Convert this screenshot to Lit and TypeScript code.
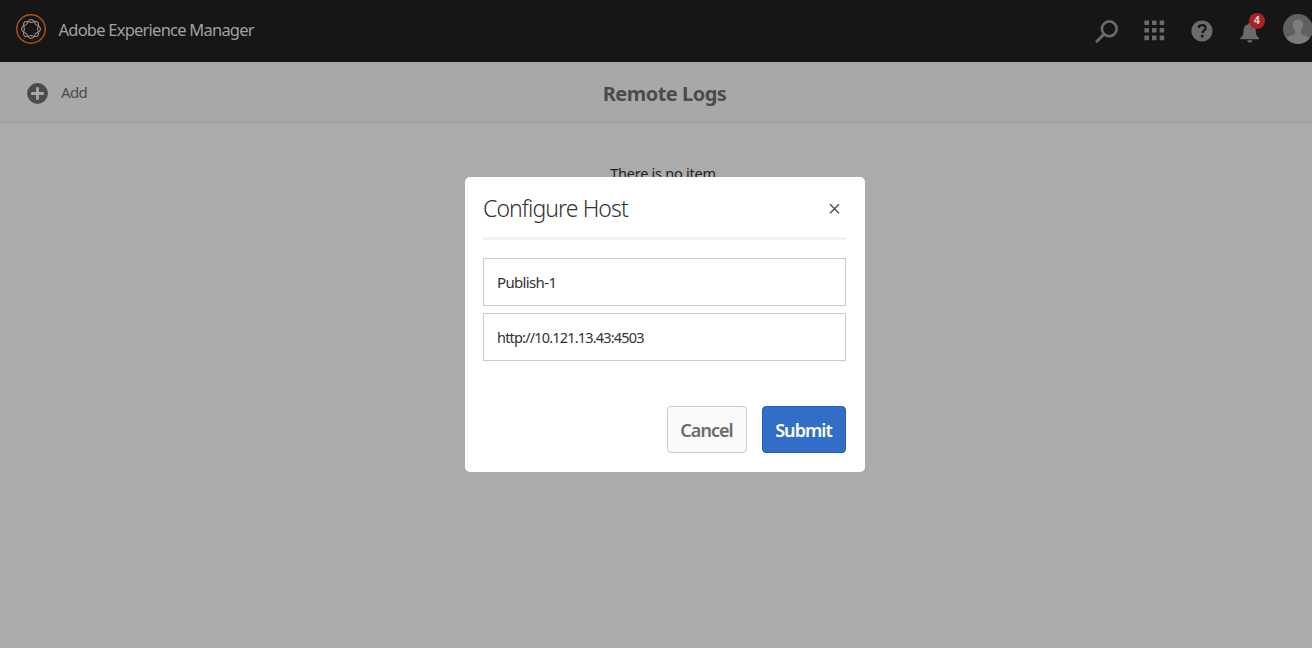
import { LitElement, html, css, svg } from "lit";
import { customElement, property } from "lit/decorators.js";

// Closed curve with four lobes around the centre of the logo.
const lobes = (amplitude: number) => {
  const points = Array.from({ length: 72 }, (_, i) => {
    const t = (i / 72) * Math.PI * 2;
    const r = 8 + amplitude * Math.cos(4 * t);
    return `${(16 + r * Math.cos(t)).toFixed(2)} ${(16 + r * Math.sin(t)).toFixed(2)}`;
  });
  return `M${points.join("L")}Z`;
};
const gridOffsets = [0.4, 8, 15.6];

@customElement("shell-header")
class ShellHeader extends LitElement {
  @property({ type: Number }) notifications = 4;

  static styles = css`
    :host { display: flex; align-items: flex-start; height: 62px; box-sizing: border-box; padding-left: 15px; background: #161616; overflow: hidden; color: #a0a0a0; }
    svg { display: block; flex: none; }
    .logo { margin-top: 13px; }
    .brand { margin-left: 11.5px; line-height: 60px; font-size: 16.5px; letter-spacing: -0.77px; white-space: nowrap; }
    .tools { display: flex; margin-left: auto; margin-right: -1px; }
    .tool { display: flex; position: relative; }
    .search { margin: 18px 25px 0 0; }
    .grid { margin: 20px 26px 0 0; }
    .help { margin: 20px 27px 0 0; }
    .bell { margin: 21px 23px 0 0; }
    .avatar { margin: 14px 0 0; }
    .badge { position: absolute; left: 9px; top: 13px; width: 16px; height: 16px; border-radius: 50%; background: #ac2121; color: #cfcfcf; font-size: 11px; font-weight: 700; line-height: 14px; text-align: center; }
  `;

  render() {
    return html`
      <svg class="logo" width="32" height="32" viewBox="0 0 32 32" fill="none">
        <circle cx="16" cy="16" r="14.3" stroke="#b4520f" stroke-width="1.4" />
        <g stroke="#998d85" stroke-width="1.1">
          <path d=${lobes(1.4)} />
          <path d=${lobes(-1.4)} />
        </g>
      </svg>
      <div class="brand">Adobe Experience Manager</div>
      <div class="tools">
        <div class="tool search">
          <svg width="24" height="25" viewBox="0 0 24 25" fill="none" stroke="#6b6b6b">
            <circle cx="14.3" cy="10.8" r="7.4" stroke-width="2.6" />
            <path d="M8.7 16.5 2 23.2" stroke-width="3" stroke-linecap="round" />
          </svg>
        </div>
        <div class="tool grid">
          <svg width="21" height="21" viewBox="0 0 21 21" fill="#6b6b6b">
            ${gridOffsets.map((y) => gridOffsets.map((x) => svg`<rect x=${x} y=${y} width="4.6" height="4.6" rx="0.4" />`))}
          </svg>
        </div>
        <div class="tool help">
          <svg width="22" height="22" viewBox="0 0 22 22">
            <circle cx="11" cy="11" r="10.6" fill="#6b6b6b" />
            <path d="M7.9 8.1V6.2C9 5.5 10.2 5.2 11.3 5.2c2 0 3.3 1 3.3 2.7 0 2.8-3.1 2.7-3.1 5" fill="none" stroke="#161616" stroke-width="2.2" />
            <circle cx="11.2" cy="16.1" r="1.5" fill="#161616" />
          </svg>
        </div>
        <div class="tool">
          <svg class="bell" width="20" height="22" viewBox="0 0 20 22" fill="#6b6b6b">
            <path d="M8.2 3.2C8.2 1.2 10.8 1.2 10.8 3.2 14.5 4 15.8 7 15.8 10.2c0 3.6 1.2 5.3 3.2 6.7v1.4H0.3v-1.4c2-1.4 3.2-3.1 3.2-6.7C3.5 7 4.5 4 8.2 3.2Z" />
            <path d="M7 19.3h5.6Q12 21.7 9.8 21.7 7.6 21.7 7 19.3Z" />
          </svg>
          <div class="badge">${this.notifications}</div>
        </div>
        <div class="tool avatar">
          <svg width="30" height="30" viewBox="0 0 30 30">
            <defs><clipPath id="disc"><circle cx="15" cy="15" r="15" /></clipPath></defs>
            <g clip-path="url(#disc)">
              <rect width="30" height="30" fill="#606060" />
              <path d="M15 5.5c3.2 0 5.1 2.3 5 5.5-.1 2.7-1 4.8-2.3 6.2-.3 2.2.8 3.5 3.3 4.2 2.8.8 4.6 1.5 5.5 3V31H3.5v-6.6c.9-1.5 2.7-2.2 5.5-3 2.5-.7 3.6-2 3.3-4.2C11 15.8 10.1 13.7 10 11c-.1-3.2 1.8-5.5 5-5.5Z" fill="#7c7c7c" />
            </g>
          </svg>
        </div>
      </div>
    `;
  }
}

@customElement("host-dialog")
class HostDialog extends LitElement {
  static styles = css`
    :host { display: block; box-sizing: border-box; width: 400px; height: 295px; padding: 0 19px 0 18px; border-radius: 5px; background: #fff; color: #323232; }
    .head { display: flex; justify-content: space-between; height: 60px; border-bottom: 3px solid #f2f2f2; }
    h2 { margin: 0; font-size: 23px; font-weight: 300; line-height: 62px; letter-spacing: -0.92px; white-space: nowrap; }
    .close { margin: 26px 6px 0 0; }
    .fields { display: flex; flex-direction: column; gap: 7px; margin-top: 18px; }
    input { box-sizing: border-box; width: 100%; height: 48px; margin: 0; padding: 0 13px 1px; border: 1px solid #cbcbcb; border-radius: 0; outline: none; background: #fff; color: #323232; font: inherit; font-size: 15px; }
    .name { letter-spacing: -0.65px; }
    .address { font-size: 14.5px; letter-spacing: -0.82px; }
    .actions { display: flex; justify-content: flex-end; gap: 15px; margin-top: 45px; }
    button { box-sizing: border-box; height: 47px; padding: 0 1px 0 0; border: 1px solid #cbcbcb; border-radius: 4px; font: inherit; font-size: 18px; font-weight: 600; white-space: nowrap; }
    .cancel { width: 80px; background: #fafafa; color: #6b6b6b; letter-spacing: -0.95px; }
    .submit { width: 84px; border-color: #2360b8; background: #326ec8; color: #fff; letter-spacing: -0.95px; }
  `;

  render() {
    return html`
      <div class="head">
        <h2>Configure Host</h2>
        <svg class="close" width="11" height="12" viewBox="0 0 11 12"><path d="M1 1.3 10 10.3M10 1.3 1 10.3" stroke="#5a5a5a" stroke-width="1.6" /></svg>
      </div>
      <div class="fields">
        <input class="name" .value=${"Publish-1"} aria-label="Name" />
        <input class="address" .value=${"http://10.121.13.43:4503"} aria-label="Address" spellcheck="false" />
      </div>
      <div class="actions">
        <button class="cancel">Cancel</button>
        <button class="submit">Submit</button>
      </div>
    `;
  }
}

@customElement("app-root")
class AppRoot extends LitElement {
  static styles = css`
    :host { display: block; position: relative; height: 100vh; overflow: hidden; background: #ababab; font-family: "Noto Sans", "Open Sans", sans-serif; }
    .bar { display: grid; grid-template-columns: 1fr auto 1fr; align-items: center; box-sizing: border-box; height: 61px; padding: 0 10px 0 27px; border-bottom: 1px solid #9c9c9c; background: #a8a8a8; color: #4b4b4b; }
    .add { display: flex; align-items: center; gap: 13px; font-size: 15px; letter-spacing: -0.6px; }
    .add svg { display: block; margin-top: 2px; }
    h1 { margin: 3px 0 0; font-size: 20px; font-weight: 700; letter-spacing: -0.5px; white-space: nowrap; }
    .empty { margin: 40px 0 0; padding-left: 14px; text-align: center; font-size: 14.5px; line-height: 20px; letter-spacing: -0.25px; color: #222; }
    .modal { position: absolute; inset: 0; display: flex; justify-content: center; align-items: flex-start; padding: 177px 0 0 18px; }
  `;

  render() {
    return html`
      <shell-header></shell-header>
      <div class="bar">
        <div class="add">
          <svg width="21" height="21" viewBox="0 0 21 21"><circle cx="10.5" cy="10.5" r="10.4" fill="#4b4b4b" /><path d="M10.5 4.2v12.6M4.2 10.5h12.6" stroke="#a8a8a8" stroke-width="2.8" /></svg>
          <span>Add</span>
        </div>
        <h1>Remote Logs</h1>
      </div>
      <p class="empty">There is no item</p>
      <div class="modal"><host-dialog></host-dialog></div>
    `;
  }
}
